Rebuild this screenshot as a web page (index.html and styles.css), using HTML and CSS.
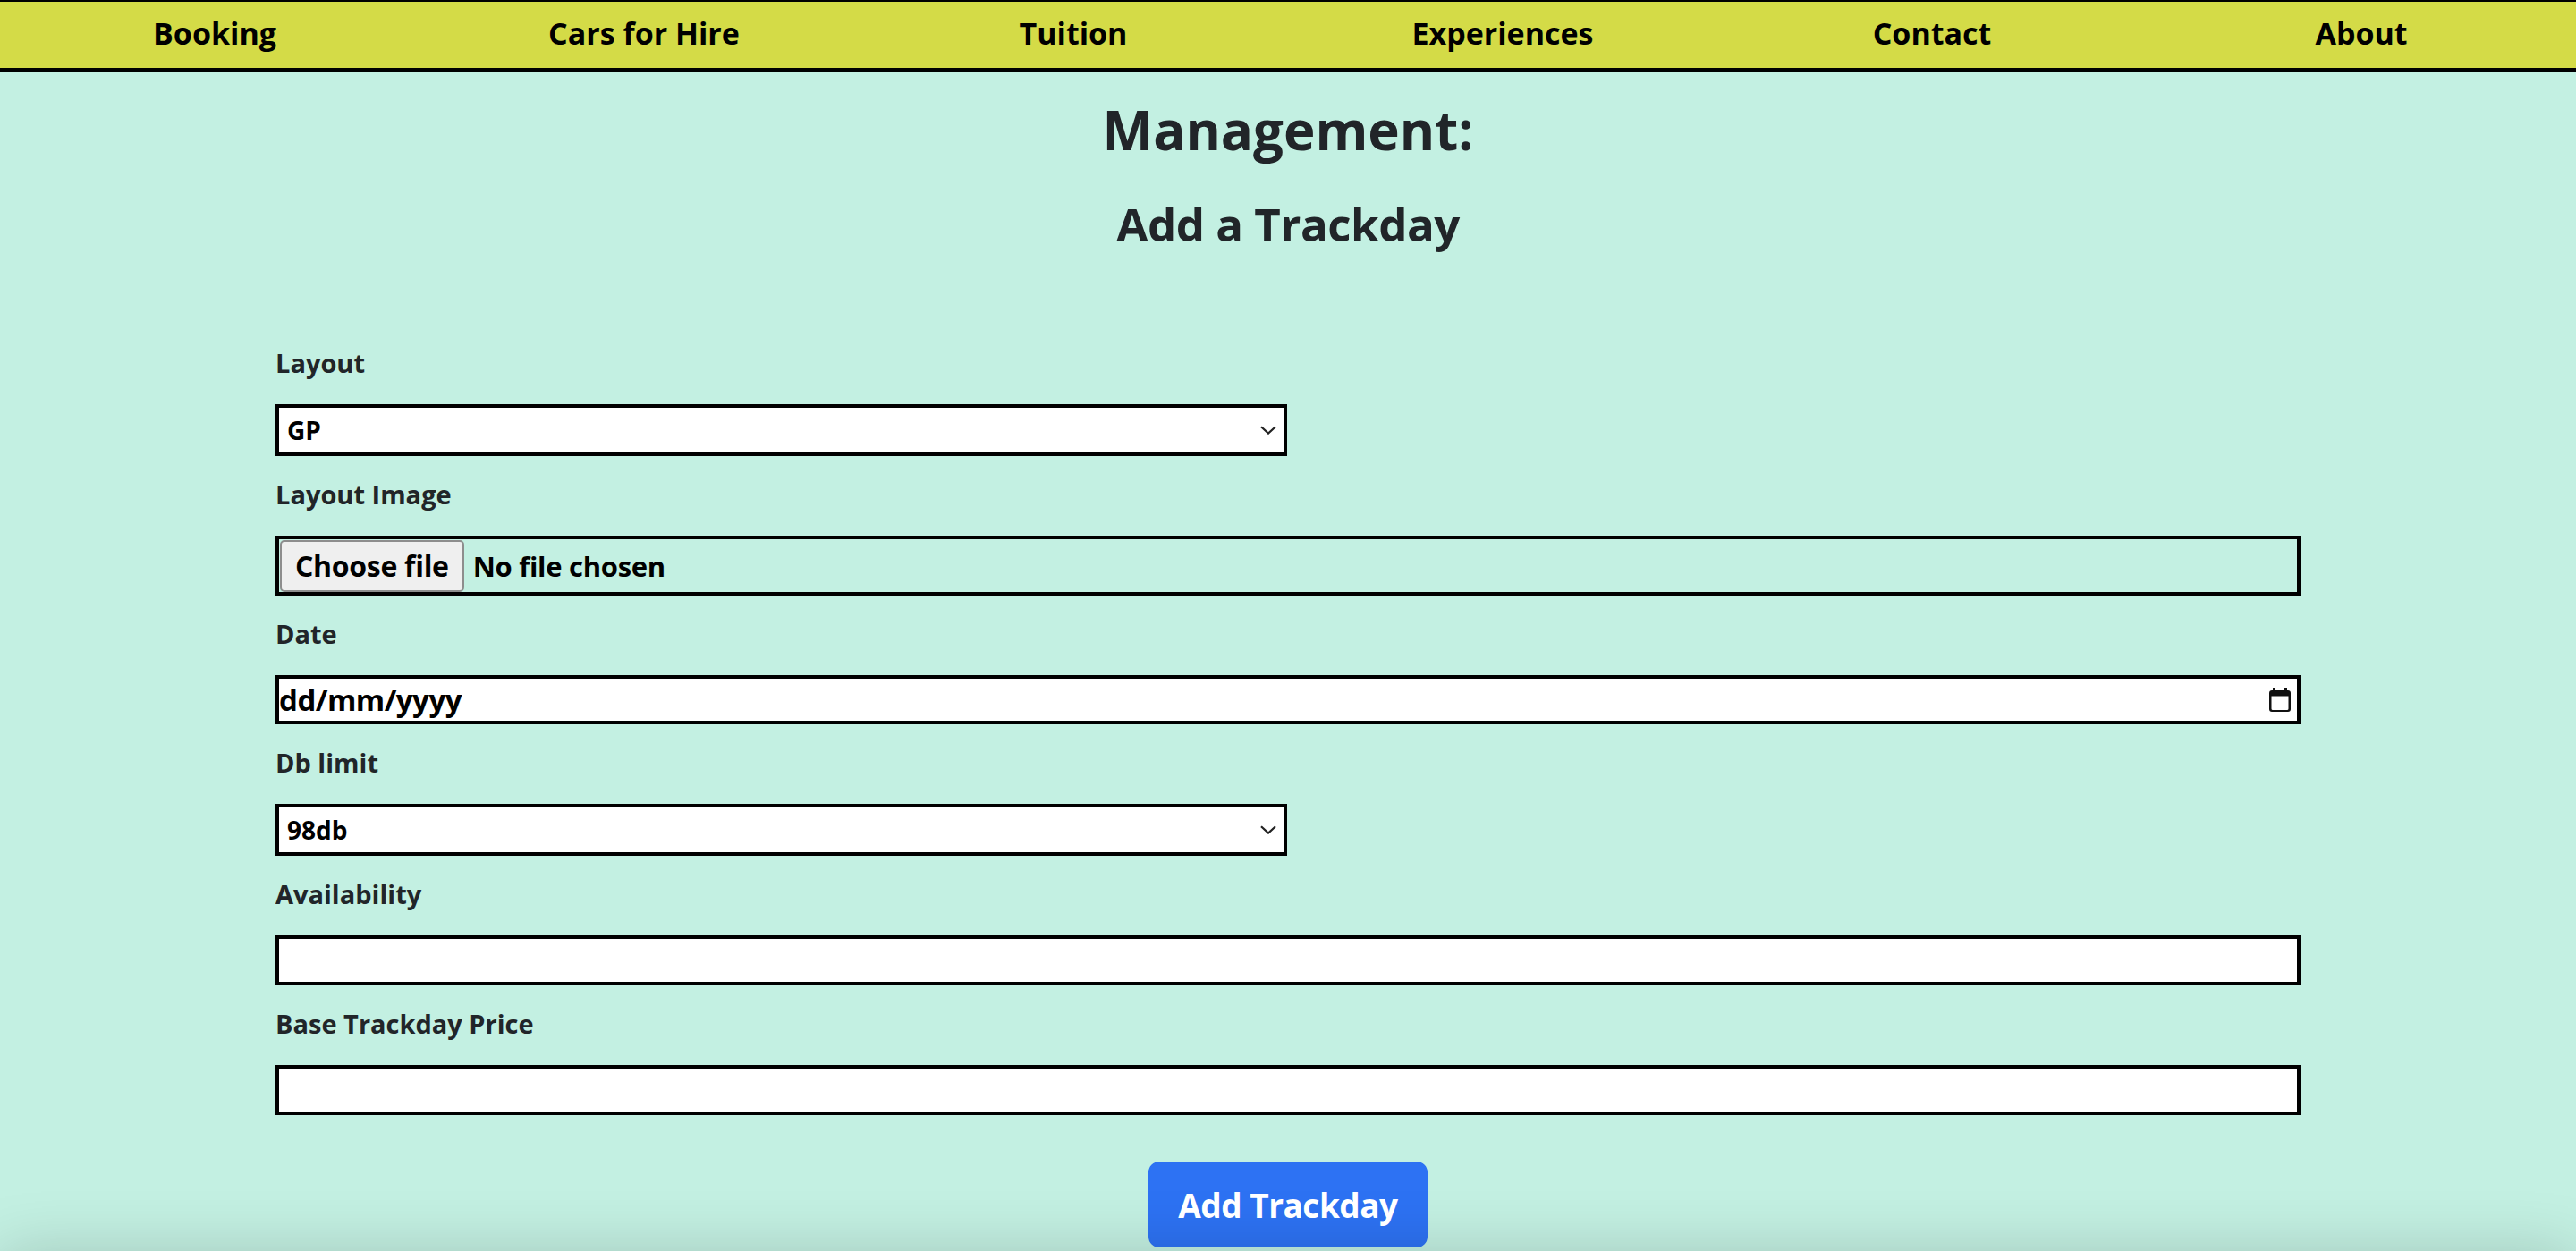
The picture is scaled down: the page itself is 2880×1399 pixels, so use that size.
FILE: index.html
```html
<!DOCTYPE html>
<html lang="en">
<head>
<meta charset="utf-8">
<title>Management: Add a Trackday</title>
<link rel="stylesheet" href="styles.css">
</head>
<body>
<nav class="topnav">
  <a class="nav-link" href="#">Booking</a>
  <a class="nav-link" href="#">Cars for Hire</a>
  <a class="nav-link" href="#">Tuition</a>
  <a class="nav-link" href="#">Experiences</a>
  <a class="nav-link" href="#">Contact</a>
  <a class="nav-link" href="#">About</a>
</nav>
<main class="page">
  <h2 class="page-title">Management:</h2>
  <h3 class="page-subtitle">Add a Trackday</h3>
  <form class="track-form">
    <div class="field">
      <label class="field-label" for="layout">Layout</label>
      <div class="control select-box half">
        <select class="select-input" id="layout"><option>GP</option></select>
        <svg class="chevron" width="18" height="10" viewBox="0 0 18 10"><path d="M1 1.2 L9 8.6 L17 1.2" fill="none" stroke="#222" stroke-width="2.2"/></svg>
      </div>
    </div>
    <div class="field">
      <label class="field-label">Layout Image</label>
      <div class="control file-box">
        <button type="button" class="file-btn">Choose file</button>
        <span class="file-name">No file chosen</span>
      </div>
    </div>
    <div class="field">
      <label class="field-label" for="date">Date</label>
      <div class="control date-box">
        <input class="date-input" id="date" type="text" placeholder="dd/mm/yyyy">
        <svg class="cal-icon" width="26" height="28" viewBox="0 0 26 28">
          <rect x="5" y="0" width="3" height="5" fill="#111"/>
          <rect x="18" y="0" width="3" height="5" fill="#111"/>
          <path d="M4 3 H22 A3 3 0 0 1 25 6 V24 A3 3 0 0 1 22 27 H4 A3 3 0 0 1 1 24 V6 A3 3 0 0 1 4 3 Z M3.5 9.5 V23.5 A1.5 1.5 0 0 0 5 25 H21 A1.5 1.5 0 0 0 22.5 23.5 V9.5 Z" fill="#111" fill-rule="evenodd"/>
        </svg>
      </div>
    </div>
    <div class="field">
      <label class="field-label" for="db">Db limit</label>
      <div class="control select-box half">
        <select class="select-input" id="db"><option>98db</option></select>
        <svg class="chevron" width="18" height="10" viewBox="0 0 18 10"><path d="M1 1.2 L9 8.6 L17 1.2" fill="none" stroke="#222" stroke-width="2.2"/></svg>
      </div>
    </div>
    <div class="field">
      <label class="field-label" for="avail">Availability</label>
      <input class="control text-input" id="avail" type="text">
    </div>
    <div class="field">
      <label class="field-label" for="price">Base Trackday Price</label>
      <input class="control text-input" id="price" type="text">
    </div>
    <button type="submit" class="submit-btn">Add Trackday</button>
  </form>
</main>
<footer class="site-footer"></footer>
</body>
</html>
```
FILE: styles.css
```css
* { box-sizing: border-box; }

html, body {
  margin: 0;
  padding: 0;
}

body {
  background: #c3f0e2;
  font-family: "Open Sans", Lato, sans-serif;
  color: #212529;
}

.topnav {
  display: grid;
  grid-template-columns: repeat(6, 1fr);
  align-items: center;
  height: 80px;
  background: #d4db47;
  border-top: 2px solid #000;
  border-bottom: 4px solid #000;
}

.nav-link {
  justify-self: center;
  font-size: 34px;
  font-weight: 700;
  color: #000;
  text-decoration: none;
  line-height: 1;
  margin-top: -5px;
}

.page {
  width: 2264px;
  margin: 0 auto;
}

.page-title {
  margin: 29px 0 0;
  font-size: 60px;
  line-height: 72px;
  font-weight: 700;
  text-align: center;
}

.page-subtitle {
  margin: 37px 0 0;
  font-size: 51px;
  line-height: 64px;
  font-weight: 700;
  text-align: center;
  letter-spacing: -0.5px;
}

.track-form {
  margin-top: 103px;
}

.field + .field {
  margin-top: 22px;
}

.field-label {
  display: block;
  font-size: 29px;
  line-height: 42px;
  font-weight: 700;
  margin-bottom: 25px;
}

.control {
  width: 100%;
  border: 4px solid #000;
  background: #fff;
}

.half {
  width: 1131px;
}

.select-box {
  display: flex;
  align-items: center;
  height: 58px;
}

.select-input {
  flex: 1;
  height: 100%;
  appearance: none;
  -webkit-appearance: none;
  border: none;
  background: transparent;
  outline: none;
  padding: 0 0 0 9px;
  font-family: inherit;
  font-size: 28px;
  font-weight: 700;
  color: #000;
}

.chevron {
  margin-right: 8px;
  flex: none;
}

.file-box {
  display: flex;
  align-items: center;
  height: 67px;
  padding: 0 1px;
  background: transparent;
}

.file-btn {
  height: 58px;
  padding: 0 15px;
  background: #efefef;
  border: 2px solid #8d8d8d;
  border-radius: 5px;
  font-family: inherit;
  font-size: 32px;
  font-weight: 700;
  color: #000;
  letter-spacing: -0.3px;
}

.file-name {
  margin-left: 10px;
  font-size: 31px;
  font-weight: 700;
  color: #000;
  letter-spacing: -0.3px;
}

.date-box {
  display: flex;
  align-items: center;
  height: 55px;
}

.date-input {
  flex: 1;
  border: none;
  outline: none;
  background: transparent;
  padding: 0;
  font-family: inherit;
  font-size: 33px;
  font-weight: 700;
  color: #000;
  letter-spacing: -0.5px;
}

.date-input::placeholder {
  color: #000;
  opacity: 1;
}

.cal-icon {
  flex: none;
  margin-right: 6px;
}

.text-input {
  display: block;
  height: 56px;
  padding: 0 8px;
  font-family: inherit;
  font-size: 28px;
  outline: none;
}

.submit-btn {
  display: block;
  margin: 52px auto 0;
  height: 96px;
  width: 312px;
  padding: 0;
  background: #2d72f3;
  border: 2px solid #2d72f3;
  border-radius: 12px;
  font-family: inherit;
  font-size: 37px;
  font-weight: 700;
  color: #fff;
  letter-spacing: -0.5px;
}

.site-footer {
  margin-top: 10px;
  height: 240px;
  background: #c3f0e2;
  box-shadow: 0 0 70px rgba(0, 0, 0, 0.2);
}
```
